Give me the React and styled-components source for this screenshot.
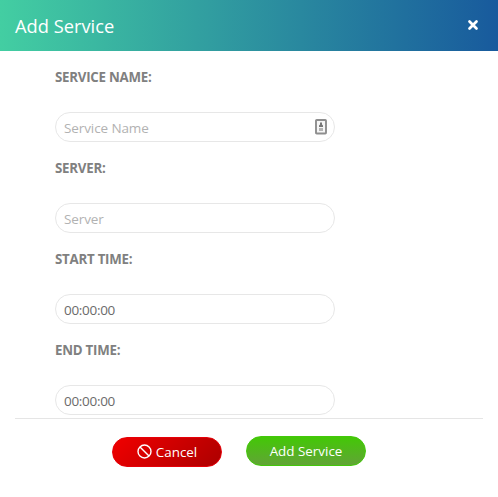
import React from "react";
import styled, { createGlobalStyle, css } from "styled-components";

const GlobalStyle = createGlobalStyle`
  *, *::before, *::after { box-sizing: border-box; }
  body { margin: 0; background: #fff; overflow: hidden; }
  body, button, input { font-family: "Open Sans", "Noto Sans", sans-serif; }
`;

const Dialog = styled.div`
  display: flex;
  flex-direction: column;
  width: 498px;
  height: 497px;
  background: #fff;
`;

const Header = styled.header`
  display: flex;
  align-items: center;
  justify-content: space-between;
  height: 51px;
  flex: none;
  padding: 0 19px 0 15px;
  background: linear-gradient(90deg, #43cea2, #185a9d);
`;

const Title = styled.h4`
  margin: 0;
  color: #fff;
  font-size: 18.3px;
  font-weight: 400;
  line-height: 24px;
`;

const CloseButton = styled.button`
  display: flex;
  margin-bottom: 1px;
  padding: 0;
  border: 0;
  background: none;
`;

const Body = styled.main`
  height: 367px;
  flex: none;
  padding: 16px 55px 0;
  overflow: hidden;
`;

const Field = styled.div`
  display: flex;
  flex-direction: column;
  height: 91px;
`;

const Label = styled.label`
  height: 45px;
  color: #808080;
  font-size: 13.3px;
  font-weight: 700;
  line-height: 21px;
  letter-spacing: -0.25px;
`;

const InputShell = styled.div`
  display: flex;
  align-items: center;
  width: 280px;
  height: 30px;
  padding: 0 7px 0 8px;
  border: 1px solid #e7e7e7;
  border-radius: 15px;
`;

const Input = styled.input`
  flex: 1;
  min-width: 0;
  height: 20px;
  margin-top: 2px;
  padding: 0;
  border: 0;
  outline: 0;
  background: none;
  color: #6b6b6b;
  font-size: 13.5px;
  letter-spacing: ${(p) => p.$tracking};
  &::placeholder { color: #b2b2b2; opacity: 1; }
`;

const Footer = styled.footer`
  display: flex;
  align-items: flex-start;
  gap: 24px;
  margin: 0 15px;
  padding: 17px 0 0 97px;
  border-top: 1px solid #e5e5e5;
`;

const variants = {
  cancel: css`
    width: 110px;
    margin-top: 1px;
    border-color: #e60008;
    background: linear-gradient(135deg, #f00000, #ac0000);
  `,
  submit: css`
    width: 120px;
    border-color: #43c80a;
    background: linear-gradient(180deg, #43c806, #61a436);
  `,
};

const Button = styled.button`
  display: flex;
  align-items: center;
  justify-content: center;
  gap: 4px;
  height: 30px;
  padding: 0 0 1px;
  border: 1px solid;
  border-radius: 15px;
  color: #fff;
  font-size: 13.4px;
  font-weight: 500;
  line-height: 20px;
  ${(p) => variants[p.$variant]}
`;

const CloseIcon = () => (
  <svg width="12" height="12" viewBox="0 0 12 12">
    <path d="M2.5 2.5 9.5 9.5M9.5 2.5 2.5 9.5" stroke="#fff" strokeWidth="2.7" strokeLinecap="round" />
  </svg>
);

const BanIcon = () => (
  <svg width="15" height="15" viewBox="0 0 15 15" fill="none" stroke="#fff" strokeWidth="1.4">
    <circle cx="7.5" cy="7.5" r="6.5" />
    <path d="M3 3 12 12" />
  </svg>
);

const AutofillIcon = () => (
  <svg width="12" height="16" viewBox="0 0 12 16">
    <rect x="1" y="1" width="10" height="13.5" rx="0.7" fill="#f6f6f6" stroke="#8e8e8e" strokeWidth="1.9" />
    <path d="M5 3.5h2v2l1 1V8H4V6.500l1-1Z" fill="#777" />
    <path d="M4 9h4v3H4z" fill="#b4b4b4" />
  </svg>
);

const fields = [
  { label: "SERVICE NAME:", placeholder: "Service Name", icon: true },
  { label: "SERVER:", placeholder: "Server" },
  { label: "START TIME:", value: "00:00:00" },
  { label: "END TIME:", value: "00:00:00" },
];

export default function App() {
  return (
    <>
      <GlobalStyle />
      <Dialog>
        <Header>
          <Title>Add Service</Title>
          <CloseButton aria-label="Close"><CloseIcon /></CloseButton>
        </Header>
        <Body>
          {fields.map((f) => (
            <Field key={f.label}>
              <Label>{f.label}</Label>
              <InputShell>
                <Input placeholder={f.placeholder} defaultValue={f.value} $tracking={f.value ? "-0.3px" : "-0.1px"} />
                {f.icon && <AutofillIcon />}
              </InputShell>
            </Field>
          ))}
        </Body>
        <Footer>
          <Button $variant="cancel"><BanIcon />Cancel</Button>
          <Button $variant="submit">Add Service</Button>
        </Footer>
      </Dialog>
    </>
  );
}
